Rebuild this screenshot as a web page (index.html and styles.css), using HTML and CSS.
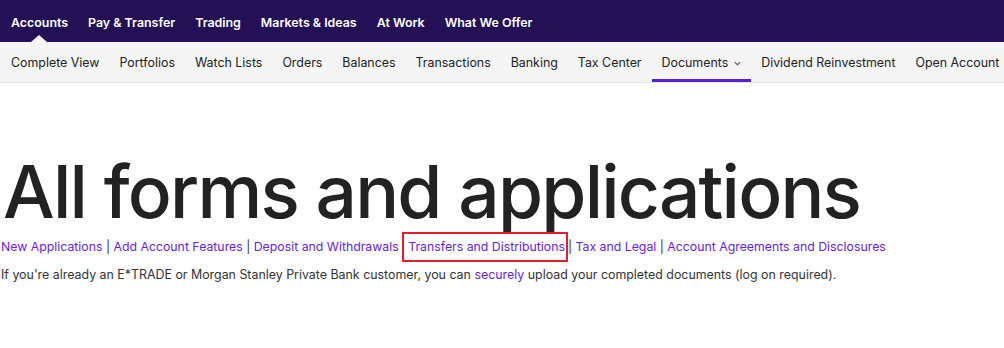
FILE: index.html
```html
<!DOCTYPE html>
<html lang="en">
<head>
    <meta charset="UTF-8">
    <meta name="viewport" content="width=device-width, initial-scale=1.0">
    <title>All forms and applications</title>
    <link rel="stylesheet" href="styles.css">
</head>
<body>
    <header class="site-header">
        <nav class="main-nav">
            <a href="#" class="main-link active">Accounts</a>
            <a href="#" class="main-link">Pay &amp; Transfer</a>
            <a href="#" class="main-link">Trading</a>
            <a href="#" class="main-link">Markets &amp; Ideas</a>
            <a href="#" class="main-link">At Work</a>
            <a href="#" class="main-link">What We Offer</a>
        </nav>
        <nav class="sub-nav">
            <a href="#" class="sub-link">Complete View</a>
            <a href="#" class="sub-link">Portfolios</a>
            <a href="#" class="sub-link">Watch Lists</a>
            <a href="#" class="sub-link">Orders</a>
            <a href="#" class="sub-link">Balances</a>
            <a href="#" class="sub-link">Transactions</a>
            <a href="#" class="sub-link">Banking</a>
            <a href="#" class="sub-link">Tax Center</a>
            <a href="#" class="sub-link active">Documents
                <svg class="caret" viewBox="0 0 8 5" width="7" height="5"><polyline points="1,1 4,4 7,1" fill="none" stroke="#444" stroke-width="1.2"/></svg>
            </a>
            <a href="#" class="sub-link">Dividend Reinvestment</a>
            <a href="#" class="sub-link">Open Account</a>
        </nav>
    </header>

    <main class="content">
        <h1 class="page-title">All forms and applications</h1>
        <div class="form-links">
            <a href="#">New Applications</a> |
            <a href="#">Add Account Features</a> |
            <a href="#">Deposit and Withdrawals</a>
            <a href="#" class="highlighted">Transfers and Distributions</a>|
            <a href="#">Tax and Legal</a> |
            <a href="#">Account Agreements and Disclosures</a>
        </div>
        <p class="upload-note">If you're already an E*TRADE or Morgan Stanley Private Bank customer, you can <a href="#">securely</a> upload your completed documents (log on required).</p>
    </main>
</body>
</html>
```

FILE: styles.css
```css
* {
    margin: 0;
    padding: 0;
    box-sizing: border-box;
}

body {
    font-family: Inter, 'Noto Sans', sans-serif;
    background: white;
    color: #222;
    overflow: hidden;
}

a {
    text-decoration: none;
}

.main-nav {
    display: flex;
    height: 42px;
    background: #241055;
    padding-left: 1px;
}

.main-link {
    position: relative;
    display: flex;
    align-items: center;
    padding: 3px 10px 0 10px;
    color: white;
    font-size: 12.4px;
    font-weight: 600;
    white-space: nowrap;
}

/* little notch pointing at the current section */
.main-link.active::after {
    content: '';
    position: absolute;
    left: 50%;
    bottom: 0;
    margin-left: -9px;
    border-left: 8px solid transparent;
    border-right: 8px solid transparent;
    border-bottom: 7px solid #f5f5f5;
}

.sub-nav {
    display: flex;
    height: 41px;
    background: #f5f5f5;
    border-bottom: 1px solid #e3e3e3;
    padding-left: 1px;
    overflow: hidden;
}

.sub-link {
    display: flex;
    align-items: center;
    gap: 6px;
    padding: 3px 10px 0;
    color: #222;
    font-size: 12.4px;
    white-space: nowrap;
    border-bottom: 3px solid transparent;
}

.sub-link.active {
    border-bottom-color: #5a1ed9;
}

.caret {
    margin-top: 2px;
}

.content {
    padding: 66px 3px 0;
}

.page-title {
    font-size: 73px;
    font-weight: 500;
    letter-spacing: -1.8px;
    line-height: 86px;
    color: #222;
}

.form-links {
    margin-top: -3px;
    font-size: 12.3px;
    line-height: 28px;
    color: #333;
    margin-left: -2px;
}

.form-links a,
.upload-note a {
    color: #6a23dc;
}

.form-links .highlighted {
    display: inline-block;
    border: 2px solid #e3202a;
    padding: 0 1px 0 4px;
    line-height: 26px;
}

.upload-note {
    margin-top: 3px;
    font-size: 12.4px;
    line-height: 20px;
    color: #333;
    margin-left: -2px;
}
```
